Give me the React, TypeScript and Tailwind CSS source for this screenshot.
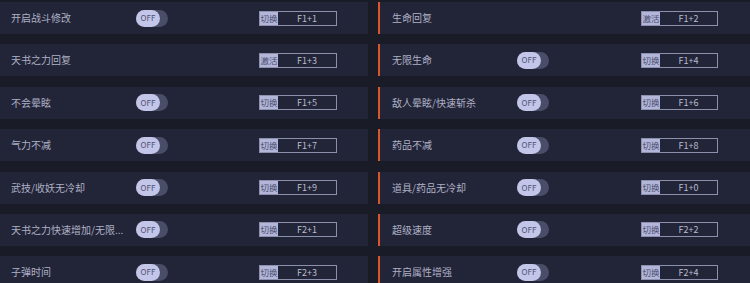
const font = { fontFamily: '"Noto Sans CJK SC", "Noto Sans", sans-serif' }

type Item = { label: string; toggle: boolean; mode: string; key: string }

const left: Item[] = [
  { label: "开启战斗修改", toggle: true, mode: "切换", key: "F1+1" },
  { label: "天书之力回复", toggle: false, mode: "激活", key: "F1+3" },
  { label: "不会晕眩", toggle: true, mode: "切换", key: "F1+5" },
  { label: "气力不减", toggle: true, mode: "切换", key: "F1+7" },
  { label: "武技/收妖无冷却", toggle: true, mode: "切换", key: "F1+9" },
  { label: "天书之力快速增加/无限...", toggle: true, mode: "切换", key: "F2+1" },
  { label: "子弹时间", toggle: true, mode: "切换", key: "F2+3" },
]

const right: Item[] = [
  { label: "生命回复", toggle: false, mode: "激活", key: "F1+2" },
  { label: "无限生命", toggle: true, mode: "切换", key: "F1+4" },
  { label: "敌人晕眩/快速斩杀", toggle: true, mode: "切换", key: "F1+6" },
  { label: "药品不减", toggle: true, mode: "切换", key: "F1+8" },
  { label: "道具/药品无冷却", toggle: true, mode: "切换", key: "F1+0" },
  { label: "超级速度", toggle: true, mode: "切换", key: "F2+2" },
  { label: "开启属性增强", toggle: true, mode: "切换", key: "F2+4" },
]

function Toggle() {
  return (
    <div className="flex h-[17px] w-[32px] items-center rounded-full bg-[#4a4d68]">
      <div className="flex h-[17px] w-[24px] items-center justify-center rounded-full bg-[#c3c6e8] text-[8px] leading-[10px] text-[#4f5275]">
        OFF
      </div>
    </div>
  )
}

function KeyBox({ mode, k, w }: { mode: string; k: string; w: string }) {
  return (
    <div className={`flex h-[15px] ${w} items-stretch border border-[#8d90ad]`}>
      <div className="flex w-[18px] items-center justify-center bg-[#b3b6d9] text-[8.5px] leading-[11px] text-[#4a4d6e]">
        {mode}
      </div>
      <div className="flex flex-1 items-center justify-center text-[9px] leading-[11px] text-[#b9bccf]">
        {k}
      </div>
    </div>
  )
}

function Row({ item, side }: { item: Item; side: "l" | "r" }) {
  const isRight = side === "r"
  return (
    <div
      className={
        isRight
          ? "flex h-[32px] items-center border-l-2 border-[#d9562b] bg-[#222437] pl-[12px]"
          : "flex h-[32px] items-center bg-[#222437] pl-[11px]"
      }
    >
      <div className="w-[125px] whitespace-nowrap text-[10px] leading-[14px] text-[#aeb1c6]">
        {item.label}
      </div>
      <div className={isRight ? "w-[124px]" : "w-[123px]"}>
        {item.toggle && <Toggle />}
      </div>
      <KeyBox mode={item.mode} k={item.key} w={isRight ? "w-[77px]" : "w-[78px]"} />
    </div>
  )
}

export default function App() {
  return (
    <div
      className="h-[283px] w-[750px] overflow-hidden bg-[#191b27] pt-[2px]"
      style={font}
    >
      <div className="grid grid-cols-[368px_372px] gap-x-[10px] gap-y-[10.4px]">
        {left.flatMap((item, i) => [
          <Row key={"l" + i} item={item} side="l" />,
          <Row key={"r" + i} item={right[i]} side="r" />,
        ])}
      </div>
    </div>
  )
}
